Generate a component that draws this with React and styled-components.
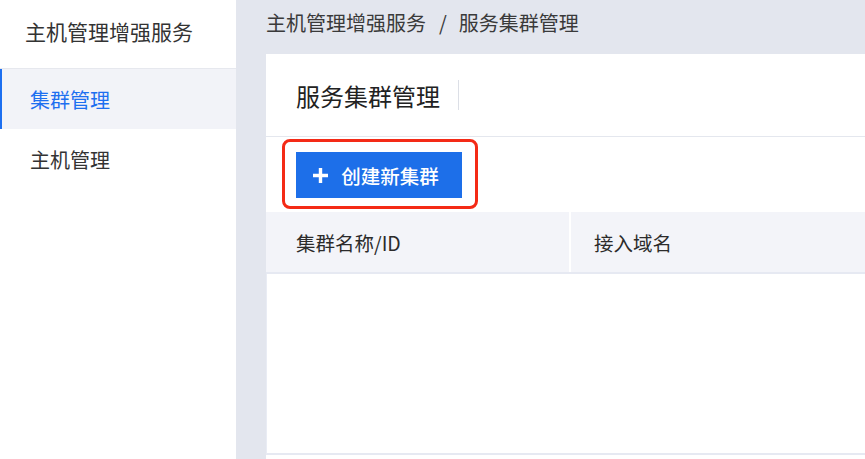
import React from 'react';
import styled, { createGlobalStyle } from 'styled-components';

const GlobalStyle = createGlobalStyle`
  html, body {
    margin: 0;
    padding: 0;
    background: #e3e6ee;
    font-family: "Noto Sans CJK SC", "Noto Sans", "Liberation Sans", sans-serif;
    -webkit-font-smoothing: antialiased;
  }
`;

const navItems = ['集群管理', '主机管理'];

const App = () => {
  return (
    <>
      <GlobalStyle />
      <Layout>
        <Sidebar>
          <SideTitle>主机管理增强服务</SideTitle>
          {navItems.map((item, i) => (
            <NavItem key={item} active={i === 0}>
              {item}
            </NavItem>
          ))}
        </Sidebar>
        <Main>
          <Breadcrumb>
            <span>主机管理增强服务</span>
            <Slash>/</Slash>
            <span>服务集群管理</span>
          </Breadcrumb>
          <Card>
            <CardHeader>
              <CardTitle>服务集群管理</CardTitle>
              <Divider />
            </CardHeader>
            <Toolbar>
              <Highlight>
                <PrimaryButton>
                  <svg width="15" height="15" viewBox="0 0 15 15">
                    <path d="M7.5 0v15M0 7.5h15" stroke="#fff" strokeWidth="3.4" />
                  </svg>
                  创建新集群
                </PrimaryButton>
                <RedMark />
              </Highlight>
            </Toolbar>
            <TableHead>
              <HeadCell width="303px" pad="30px">集群名称/ID</HeadCell>
              <HeadCell pad="23px">接入域名</HeadCell>
            </TableHead>
            <TableBody />
          </Card>
        </Main>
      </Layout>
    </>
  );
};

const Layout = styled.div`
  display: flex;
  width: 865px;
  height: 459px;
  overflow: hidden;
`;

const Sidebar = styled.aside`
  width: 236px;
  flex-shrink: 0;
  background: #ffffff;
  display: flex;
  flex-direction: column;
`;

const SideTitle = styled.div`
  height: 69px;
  display: flex;
  align-items: center;
  padding-left: 25px;
  padding-bottom: 6px;
  box-sizing: border-box;
  font-size: 21px;
  color: #333;
  border-bottom: 1px solid #e6e8ee;
`;

const NavItem = styled.div`
  height: 60px;
  display: flex;
  align-items: center;
  padding-left: 28px;
  font-size: 20px;
  color: ${props => (props.active ? '#1d6ff0' : '#333')};
  background: ${props => (props.active ? '#f2f3f8' : 'transparent')};
  border-left: 2px solid ${props => (props.active ? '#1d6ff0' : 'transparent')};
`;

const Main = styled.main`
  flex: 1;
  padding-left: 30px;
  display: flex;
  flex-direction: column;
  min-width: 0;
`;

const Breadcrumb = styled.div`
  height: 54px;
  display: flex;
  align-items: center;
  padding-bottom: 9px;
  box-sizing: border-box;
  font-size: 20px;
  color: #3a3a3a;
`;

const Slash = styled.span`
  margin: 0 12px 0 13px;
`;

const Card = styled.section`
  flex: 1;
  background: #ffffff;
  display: flex;
  flex-direction: column;
  width: 620px;
`;

const CardHeader = styled.div`
  height: 82px;
  display: flex;
  align-items: center;
  padding-left: 30px;
  border-bottom: 1px solid #e4e7ee;
`;

const CardTitle = styled.h1`
  margin: 0;
  font-size: 24px;
  font-weight: 400;
  color: #222;
`;

const Divider = styled.span`
  width: 1px;
  height: 30px;
  margin-left: 18px;
  background: #dcdfe6;
`;

const Toolbar = styled.div`
  height: 75px;
  display: flex;
  align-items: flex-start;
  padding: 15px 0 0 30px;
  box-sizing: border-box;
`;

const Highlight = styled.div`
  position: relative;
`;

const PrimaryButton = styled.button`
  width: 166px;
  height: 46px;
  border: none;
  background: #1d6fe9;
  color: #ffffff;
  font-family: inherit;
  font-size: 19.5px;
  font-weight: 500;
  display: flex;
  align-items: center;
  justify-content: center;
  gap: 13px;
  padding: 0 6px 0 0;
`;

const RedMark = styled.span`
  position: absolute;
  left: -14px;
  top: -13px;
  width: 196px;
  height: 70px;
  border: 3px solid #f42a16;
  border-radius: 8px;
  box-sizing: border-box;
  pointer-events: none;
`;

const TableHead = styled.div`
  height: 62px;
  display: flex;
  background: #f3f4f9;
  border-bottom: 2px solid #e6e9f2;
  box-sizing: border-box;
`;

const HeadCell = styled.div`
  width: ${props => props.width || 'auto'};
  flex: ${props => (props.width ? 'none' : '1')};
  display: flex;
  align-items: center;
  padding-left: ${props => props.pad};
  box-sizing: border-box;
  font-size: 19.5px;
  color: #2b2b2b;
  & + & {
    border-left: 2px solid #ffffff;
  }
`;

const TableBody = styled.div`
  height: 181px;
  flex-shrink: 0;
  border-left: 1px solid #e9ecf4;
  border-bottom: 2px solid #e6e9f2;
  box-sizing: border-box;
`;

export default App;
